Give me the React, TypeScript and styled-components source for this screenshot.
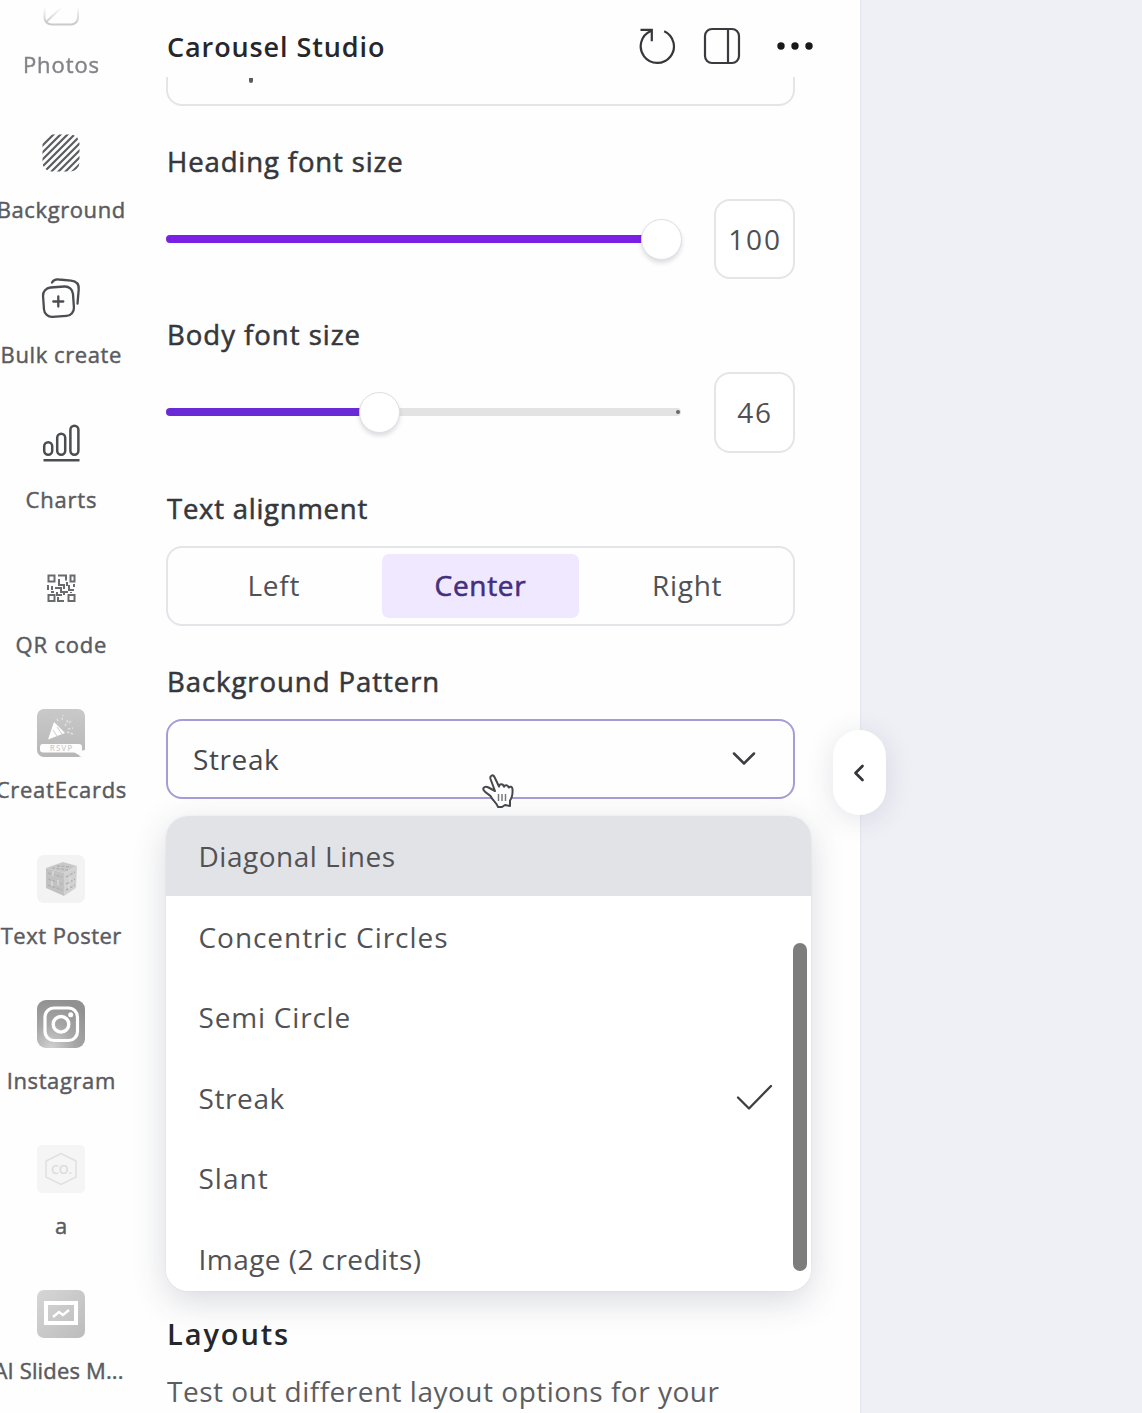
import React from 'react';
import styled, { createGlobalStyle, css } from 'styled-components';

const GlobalStyle = createGlobalStyle`
  * { box-sizing: border-box; }
  body {
    margin: 0;
    overflow: hidden;
    background: #eff0f6;
    font-family: "Open Sans", "Noto Sans", sans-serif;
    color: #46474b;
  }
`;

const Page = styled.div`
  display: flex;
  width: 1142px;
  height: 1413px;
  overflow: hidden;
`;

const Surface = styled.div`
  position: relative;
  display: flex;
  width: 860px;
  height: 100%;
  background: #fefefe;
  box-shadow: 1px 0 1px #e6e7ee;
`;

const Rail = styled.nav`
  display: flex;
  flex-direction: column;
  align-items: center;
  width: 122px;
  height: 100%;
  margin-top: -16px;
  flex-shrink: 0;
`;

const RailItem = styled.div<{ $faded?: boolean }>`
  display: flex;
  flex-direction: column;
  align-items: center;
  gap: 17px;
  height: 145.1px;
  flex-shrink: 0;
  opacity: ${(p) => (p.$faded ? 0.75 : 1)};
  svg { display: block; flex-shrink: 0; }
`;

const RailLabel = styled.span<{ $track: number; $inset: number }>`
  font-size: 22px;
  line-height: 30px;
  letter-spacing: ${(p) => p.$track}px;
  margin-right: ${(p) => p.$inset - p.$track}px;
  white-space: nowrap;
  color: #5a5b60;
  -webkit-text-stroke: 0.45px #5a5b60;
`;

const Panel = styled.main`
  display: flex;
  flex-direction: column;
  width: 738px;
  padding: 0 65px 0 44px;
`;

const PanelHeader = styled.header`
  display: flex;
  align-items: center;
  height: 77px;
  padding-top: 15px;
  margin-right: -19px;
  flex-shrink: 0;
`;

const Title = styled.h1`
  flex: 1;
  margin: 0;
  padding: 2px 0 0 1px;
  font-size: 27px;
  line-height: 36px;
  font-weight: 600;
  letter-spacing: 0.9px;
  color: #26272b;
`;

const HeaderActions = styled.div`
  display: flex;
  align-items: center;
  gap: 27px;
  svg { display: block; }
  svg:last-child { margin-left: 8px; }
`;

const Settings = styled.div`
  flex: 1;
  display: flex;
  flex-direction: column;
`;

const CutField = styled.div`
  height: 29px;
  border: 2px solid #e4e5e9;
  border-top: 0;
  border-radius: 0 0 16px 16px;
  padding-left: 81px;
  flex-shrink: 0;
`;

const Descender = styled.div`
  width: 4px;
  height: 5px;
  margin-top: 1px;
  border-radius: 0 0 2px 2px;
  background: #5b5c60;
`;

const Field = styled.section`
  display: flex;
  flex-direction: column;
  gap: 20px;
  margin-top: 39.2px;
  flex-shrink: 0;
`;

const FieldLabel = styled.label<{ $track?: number }>`
  padding-left: 1px;
  font-size: 27.5px;
  line-height: 34px;
  letter-spacing: ${(p) => p.$track ?? 0.88}px;
  color: #36373b;
  -webkit-text-stroke: 0.55px #36373b;
`;

const SliderRow = styled.div`
  display: flex;
  align-items: center;
  gap: 33px;
  height: 80px;
`;

const Track = styled.div`
  display: flex;
  align-items: center;
  flex: 1;
  height: 42px;
`;

const Filled = styled.div<{ $color: string }>`
  height: 8px;
  border-radius: 4px 0 0 4px;
  background: ${(p) => p.$color};
`;

const Knob = styled.div`
  width: 41px;
  height: 41px;
  margin: 0 -1px;
  border-radius: 50%;
  border: 1.5px solid #dedfe3;
  background: #fff;
  box-shadow: 0 3px 4px rgba(50, 55, 80, 0.16);
  flex-shrink: 0;
  z-index: 1;
`;

const Remaining = styled.div`
  display: flex;
  align-items: center;
  justify-content: flex-end;
  flex: 1;
  height: 8px;
  border-radius: 0 4px 4px 0;
  background: #e3e3e4;
`;

const TrackEnd = styled.i`
  width: 4px;
  height: 4px;
  margin-right: 1px;
  border-radius: 50%;
  background: #66676b;
`;

const NumberBox = styled.div`
  display: flex;
  align-items: center;
  justify-content: center;
  width: 81px;
  height: 80.5px;
  border: 2px solid #e4e5e8;
  border-radius: 16px;
  font-size: 28px;
  letter-spacing: 1.8px;
  padding: 0 0 1px 1px;
  color: #4f5054;
  background: #fff;
`;

const Segments = styled.div`
  display: grid;
  grid-template-columns: repeat(3, 1fr);
  gap: 9px;
  height: 80px;
  padding: 6px 7px;
  border: 2px solid #e4e5e9;
  border-radius: 16px;
`;

const Segment = styled.button<{ $active?: boolean }>`
  display: flex;
  align-items: center;
  justify-content: center;
  padding: 0 0 1px;
  border: 0;
  border-radius: 7px;
  background: transparent;
  font: 28px "Open Sans", sans-serif;
  letter-spacing: 0.7px;
  color: #505155;
  ${(p) =>
    p.$active &&
    css`
      background: #f0e8fe;
      color: #42307e;
      -webkit-text-stroke: 0.6px #42307e;
    `}
`;

const SelectWrap = styled.div`
  position: relative;
`;

const Select = styled.div`
  display: flex;
  align-items: center;
  justify-content: space-between;
  height: 80px;
  padding: 0 36px 0 25px;
  border: 2px solid #a79bd9;
  border-radius: 16px;
  font-size: 28px;
  letter-spacing: 0.6px;
  svg { display: block; }
`;

const Pointer = styled.svg`
  position: absolute;
  left: 315px;
  top: 54px;
`;

const Menu = styled.ul`
  position: absolute;
  left: 0;
  top: 97px;
  z-index: 2;
  display: flex;
  flex-direction: column;
  width: 645px;
  height: 475px;
  margin: 0;
  padding: 0;
  list-style: none;
  overflow: hidden;
  border-radius: 22px;
  background: #fff;
`;

const MenuShadow = styled.div`
  position: absolute;
  left: 0;
  top: 97px;
  width: 645px;
  height: 475px;
  border-radius: 22px;
  box-shadow: 0 0 2px rgba(50, 55, 85, 0.1), 0 10px 34px rgba(50, 55, 85, 0.18);
`;

const MenuItem = styled.li<{ $hover?: boolean; $track: number }>`
  display: flex;
  align-items: center;
  justify-content: space-between;
  height: 80.6px;
  flex-shrink: 0;
  padding: 0 38px 0 32.5px;
  font-size: 28px;
  letter-spacing: ${(p) => p.$track}px;
  background: ${(p) => (p.$hover ? '#e2e3e6' : 'transparent')};
  color: #515256;
  svg { display: block; }
`;

const Scrollbar = styled.div`
  position: absolute;
  right: 4px;
  top: 127.5px;
  width: 14px;
  height: 328px;
  border-radius: 7px;
  background: #7d7d7e;
`;

const LayoutsHeading = styled.h2`
  margin: 516.6px 0 0;
  padding-left: 1px;
  font-size: 29px;
  line-height: 38px;
  font-weight: 600;
  letter-spacing: 1.9px;
  color: #26272b;
`;

const LayoutsText = styled.p`
  margin: 19.5px 0 0;
  padding-left: 1px;
  font-size: 28px;
  line-height: 36px;
  letter-spacing: 0.5px;
  white-space: nowrap;
  color: #5c5d61;
`;

const CollapseTab = styled.button`
  position: absolute;
  right: -26px;
  top: 730px;
  display: flex;
  align-items: center;
  justify-content: center;
  width: 53px;
  height: 85px;
  padding: 0 1px 0 0;
  border: 0;
  border-radius: 27px;
  background: #fff;
  box-shadow: 0 4px 28px rgba(50, 55, 85, 0.13);
`;

const PhotosIcon = () => (
  <svg width="48" height="48" viewBox="0 0 48 48" fill="none" stroke="#b9babd" strokeWidth="2">
    <defs>
      <linearGradient id="photoFade" x1="0" y1="0" x2="0" y2="1">
        <stop offset=".48" stopColor="#fff" stopOpacity="0" />
        <stop offset=".8" stopColor="#fff" />
      </linearGradient>
      <mask id="photoMask"><rect width="48" height="48" fill="url(#photoFade)" /></mask>
    </defs>
    <g mask="url(#photoMask)">
      <rect x="7.500" y="6.500" width="33.500" height="34" rx="7" />
      <path d="M9 38L26 22" />
    </g>
  </svg>
);

const BackgroundIcon = () => (
  <svg width="48" height="48" viewBox="0 0 48 48" fill="none" stroke="#5b5d61" strokeWidth="2.200">
    <defs><clipPath id="bgClip"><rect x="5.500" y="5.500" width="37" height="37" rx="9" /></clipPath></defs>
    <g clipPath="url(#bgClip)">
      <path d="M2 20L20 2M2 27L27 2M2 34L34 2M2 41L41 2M2 48L48 2M9 48L48 9M16 48L48 16M23 48L48 23M30 48L48 30" />
    </g>
  </svg>
);

const BulkIcon = () => (
  <svg width="48" height="48" viewBox="0 0 48 48" fill="none" stroke="#4b4d51" strokeWidth="2.300" strokeLinecap="round">
    <rect x="6.500" y="13" width="30" height="29.500" rx="8" transform="rotate(-4 21 28)" />
    <path d="M15 8.500c1.700-3 4-3.500 7-3l12 1.200c5.500.6 8.200 4 7.700 9l-1.200 14M21.300 22.500v10M16.300 27.500h10" />
  </svg>
);

const ChartsIcon = () => (
  <svg width="48" height="48" viewBox="0 0 48 48" fill="none" stroke="#4b4d51" strokeWidth="2.500">
    <rect x="7.200" y="23.200" width="8" height="12.500" rx="4" />
    <rect x="20.200" y="14.700" width="8" height="21" rx="4" />
    <rect x="33.400" y="6.800" width="8" height="29" rx="4" />
    <path d="M6.500 41.300h36" />
  </svg>
);

const QrIcon = () => (
  <svg width="48" height="48" viewBox="0 0 48 48" fill="none" stroke="#6a6b6f" strokeWidth="2">
    <rect x="11.500" y="11.500" width="6" height="6" />
    <rect x="33.500" y="11.500" width="4" height="6" />
    <rect x="11.500" y="31" width="6" height="6" />
    <rect x="31.500" y="31" width="6" height="6" />
    <path d="M21 11.500h8v5M22 15v6h5v4M11 21v5M15 22v4M18 24h6v4h7M27 28v3M32 21v5h5M37 20v3M34 28v1M20 28v3h5M21 33v4h6M14 28h3M30 18v4" />
  </svg>
);

const CardsIcon = () => (
  <svg width="48" height="48" viewBox="0 0 48 48">
    <defs>
      <linearGradient id="cardFill" x1="0" y1="0" x2="0" y2="1">
        <stop stopColor="#c9c9c9" /><stop offset="1" stopColor="#b7b7b7" />
      </linearGradient>
    </defs>
    <rect width="48" height="48" rx="7" fill="url(#cardFill)" />
    <path d="M17 13L28 24L11 30.500z" fill="#fff" />
    <path d="M16 21l4 6M20 18l5 7" stroke="#d5d5d5" strokeWidth="1.200" />
    <path d="M21 12l-2-4M25 11l1-5M28 17l3-6M31 20l5-1M32 14l3-3M30 23l6 2" stroke="#e0e0e0" strokeWidth="1.500" strokeDasharray="2.500 1.500" />
    <rect x="3" y="35" width="42" height="8.500" rx="3" fill="#fdfdfd" />
    <path d="M37 43l11-2v7h-3z" fill="#fdfdfd" />
    <text x="24.500" y="42" textAnchor="middle" fontSize="8" fontWeight="600" letterSpacing="1" fill="#cfcfcf">RSVP</text>
  </svg>
);

const PosterIcon = () => (
  <svg width="48" height="48" viewBox="0 0 48 48">
    <rect width="48" height="48" rx="7" fill="#f3f3f3" />
    <path d="M9 13l17-6 14 4-13 7z" fill="#c9c9c9" />
    <path d="M9 13l18 5v23L9 33z" fill="#c2c2c2" />
    <path d="M27 18l13-7-1 22-12 8z" fill="#d2d2d2" />
    <path d="M11 18l14 4M11 24l14 5M11 30l14 5M29 22l9-5M29 29l9-5M29 35l9-5M15 13l16 2M20 11l14 1" stroke="#b2b2b2" strokeWidth="1.500" strokeDasharray="3 1.500" />
    <path d="M16 16v5M21 25v5M15 26v5M33 22v5M32 29v5" stroke="#dcdcdc" strokeWidth="1.500" />
  </svg>
);

const InstagramIcon = () => (
  <svg width="48" height="48" viewBox="0 0 48 48" fill="none" stroke="#fff">
    <defs>
      <radialGradient id="igFill" cx=".3" cy="1" r="1">
        <stop stopColor="#d0d0d0" /><stop offset=".5" stopColor="#a6a6a6" /><stop offset="1" stopColor="#919191" />
      </radialGradient>
    </defs>
    <rect width="48" height="48" rx="9" fill="url(#igFill)" stroke="none" />
    <rect x="8" y="8" width="32.500" height="32.500" rx="9" strokeWidth="3.200" />
    <circle cx="24" cy="24.300" r="7.800" strokeWidth="3.400" />
    <circle cx="33.700" cy="14.800" r="2.500" fill="#fff" stroke="none" />
  </svg>
);

const CoIcon = () => (
  <svg width="48" height="48" viewBox="0 0 48 48" fill="none">
    <rect width="48" height="48" rx="5" fill="#f5f5f5" />
    <path d="M24 8.500l15 7.500v16l-15 7.500L9 32V16z" stroke="#e0e0e0" strokeWidth="1.500" />
    <text x="24.500" y="28.500" textAnchor="middle" fontSize="12.500" fontWeight="600" fill="#dcdcdc">CO.</text>
  </svg>
);

const SlidesIcon = () => (
  <svg width="48" height="48" viewBox="0 0 48 48" fill="none">
    <defs>
      <linearGradient id="slideFill" x1="0" y1="0" x2="1" y2="1">
        <stop stopColor="#d6d6d6" /><stop offset="1" stopColor="#bcbcbc" />
      </linearGradient>
    </defs>
    <rect width="48" height="48" rx="7" fill="url(#slideFill)" />
    <rect x="9" y="13" width="30" height="20" stroke="#fff" strokeWidth="4" />
    <path d="M16 27l6-5 4 3 6-5" stroke="#fff" strokeWidth="2.400" />
  </svg>
);

const RefreshIcon = () => (
  <svg width="38" height="38" viewBox="0 0 38 38" fill="none" stroke="#36373a" strokeWidth="2.200">
    <path d="M26.200 4.200A16.600 16.600 0 1 1 12.900 4" />
    <path d="M2.500 2.800h11.300v11.500" />
  </svg>
);

const PanelIcon = () => (
  <svg width="38" height="38" viewBox="0 0 38 38" fill="none" stroke="#3a3b3e" strokeWidth="2.200">
    <rect x="2" y="2" width="34" height="34" rx="7" />
    <path d="M25 2v34" />
  </svg>
);

const MoreIcon = () => (
  <svg width="38" height="38" viewBox="0 0 38 38" fill="#18191b">
    <circle cx="5" cy="19" r="3.700" />
    <circle cx="19" cy="19" r="3.700" />
    <circle cx="33" cy="19" r="3.700" />
  </svg>
);

const railItems = [
  { label: 'Photos', track: 0.9, Icon: PhotosIcon },
  { label: 'Background', track: 0.6, Icon: BackgroundIcon },
  { label: 'Bulk create', track: 0.6, Icon: BulkIcon },
  { label: 'Charts', track: 0.8, Icon: ChartsIcon },
  { label: 'QR code', track: 0.8, Icon: QrIcon },
  { label: 'CreatEcards', track: 0.75, Icon: CardsIcon },
  { label: 'Text Poster', track: 0.5, Icon: PosterIcon },
  { label: 'Instagram', track: 0.6, Icon: InstagramIcon },
  { label: 'a', track: 0, Icon: CoIcon },
  { label: 'AI Slides M...', track: 0.15, inset: 5, Icon: SlidesIcon },
];

const patterns = [
  { name: 'Diagonal Lines', track: 0.5 },
  { name: 'Concentric Circles', track: 0.95 },
  { name: 'Semi Circle', track: 0.8 },
  { name: 'Streak', track: 0.6 },
  { name: 'Slant', track: 1 },
  { name: 'Image (2 credits)', track: 0.45 },
];

type SliderProps = { width: number; value: number; color: string; open?: boolean };

const Slider = ({ width, value, color, open }: SliderProps) => (
  <SliderRow>
    <Track>
      <Filled $color={color} style={{ width }} />
      <Knob />
      {open && <Remaining><TrackEnd /></Remaining>}
    </Track>
    <NumberBox>{value}</NumberBox>
  </SliderRow>
);

export default function App() {
  return (
    <Page>
      <GlobalStyle />
      <Surface>
        <Rail>
          {railItems.map(({ label, track, inset = 0, Icon }, i) => (
            <RailItem key={label} $faded={i === 0}>
              <Icon />
              <RailLabel $track={track} $inset={inset}>{label}</RailLabel>
            </RailItem>
          ))}
        </Rail>
        <Panel>
          <PanelHeader>
            <Title>Carousel Studio</Title>
            <HeaderActions>
              <RefreshIcon />
              <PanelIcon />
              <MoreIcon />
            </HeaderActions>
          </PanelHeader>
          <Settings>
            <CutField><Descender /></CutField>
            <Field>
              <FieldLabel>Heading font size</FieldLabel>
              <Slider width={476} value={100} color="#7a1fe6" />
            </Field>
            <Field>
              <FieldLabel $track={1}>Body font size</FieldLabel>
              <Slider width={194} value={46} color="#6a2bd6" open />
            </Field>
            <Field>
              <FieldLabel $track={0.75}>Text alignment</FieldLabel>
              <Segments>
                <Segment>Left</Segment>
                <Segment $active>Center</Segment>
                <Segment>Right</Segment>
              </Segments>
            </Field>
            <Field>
              <FieldLabel $track={0.95}>Background Pattern</FieldLabel>
              <SelectWrap>
                <MenuShadow />
                <Select>
                  Streak
                  <svg width="26" height="16" viewBox="0 0 26 16" fill="none" stroke="#3d3e42" strokeWidth="2.500" strokeLinecap="round" strokeLinejoin="round">
                    <path d="M3 2.500l10 10 10-10" />
                  </svg>
                </Select>
                <Menu>
                  {patterns.map((p, i) => (
                    <MenuItem key={p.name} $hover={i === 0} $track={p.track}>
                      {p.name}
                      {i === 3 && (
                        <svg width="38" height="28" viewBox="0 0 38 28" fill="none" stroke="#3d3e42" strokeWidth="2.300" strokeLinecap="round" strokeLinejoin="round">
                          <path d="M3 13.500l11 11L36 2" />
                        </svg>
                      )}
                    </MenuItem>
                  ))}
                  <Scrollbar />
                </Menu>
                <Pointer width="34" height="36" viewBox="0 0 34 36" fill="#fff" stroke="#47484c" strokeWidth="2" strokeLinejoin="round">
                  <path d="M14 18L9.500 6C8.500 2.500 12 1 13.600 4.200L18 13.500c.5-3 4-3 5 .3 1-2.500 4-2 4.700.8 1.300-1.800 3.600-.8 3.800 1.400.3 4.500-.2 8.500-2.500 11.500V33l-5-1-3 2H17c-.8-4-5.500-6.500-7.500-11C7.800 21.500 4 19.500 2.500 17c-1-3 2.200-4 5-2.500z" />
                  <path d="M17.500 21v7M21 21v7M24.500 21v7" strokeWidth="1.500" stroke="#77787c" />
                </Pointer>
              </SelectWrap>
            </Field>
            <LayoutsHeading>Layouts</LayoutsHeading>
            <LayoutsText>Test out different layout options for your</LayoutsText>
          </Settings>
        </Panel>
        <CollapseTab>
          <svg width="16" height="22" viewBox="0 0 16 22" fill="none" stroke="#343539" strokeWidth="2.700" strokeLinecap="round" strokeLinejoin="round">
            <path d="M11.500 4L4.500 11l7 7" />
          </svg>
        </CollapseTab>
      </Surface>
    </Page>
  );
}
